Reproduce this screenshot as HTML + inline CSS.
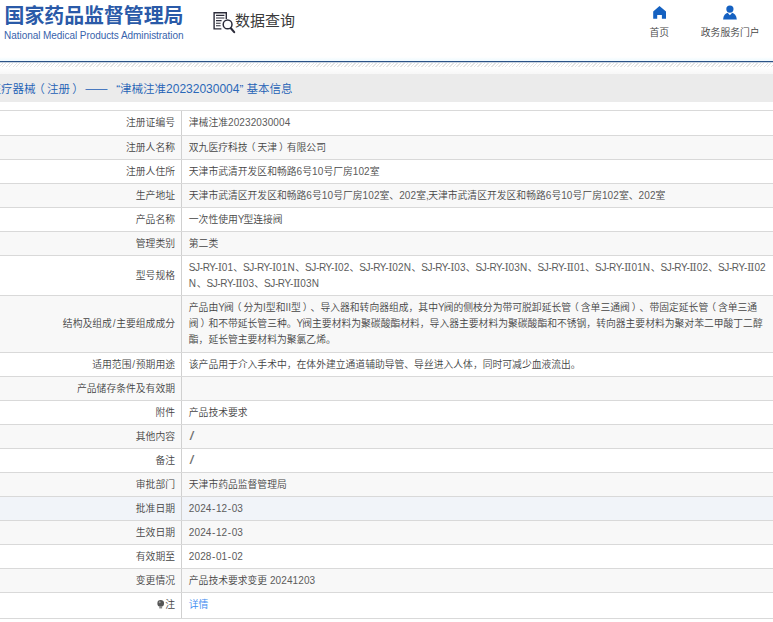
<!DOCTYPE html>
<html lang="zh-CN">
<head>
<meta charset="utf-8">
<title>国家药品监督管理局 数据查询</title>
<style>
html,body{margin:0;padding:0;}
body{width:773px;height:622px;overflow:hidden;background:#fff;position:relative;
 font-family:"Liberation Sans","Noto Sans CJK SC",sans-serif;color:#444;text-spacing-trim:space-all;}
.abs{position:absolute;white-space:nowrap;}
.logo{left:4.5px;top:2.3px;font-size:19.9px;line-height:28px;font-weight:bold;color:#2a5aa8;}
.logo-en{left:4.1px;top:29px;font-size:10px;line-height:14px;color:#3763ac;letter-spacing:-0.06px;}
.dq{left:235px;top:9.3px;font-size:15px;line-height:24px;color:#3a3a3a;}
.nav{font-size:9.81px;line-height:14px;color:#444;text-align:center;font-weight:350;}
.topline{left:0;top:61px;width:773px;height:2px;background:linear-gradient(to bottom,#2b5286 0,#2b5286 50%,rgba(43,82,134,0.25) 50%,rgba(43,82,134,0.25) 100%);}
.glow{left:0;top:57px;width:773px;height:4px;background:linear-gradient(to bottom,#ffffff,#eefaff);}
.hatch{left:0;top:63px;width:773px;height:4px;background:repeating-linear-gradient(135deg,#fff 0,#fff 1.5px,#e3e3e3 1.5px,#e3e3e3 2.47px);}
.fade{left:0;top:67px;width:773px;height:7px;background:linear-gradient(to bottom,#ffffff,#f7f7f7);}
.bar{left:0;top:74px;width:773px;height:28px;background:#ebebeb;}
.title{left:-10.5px;top:74px;font-size:11.5px;line-height:28px;color:#1c5fb5;font-weight:350;}
.title .d{font-size:12px;letter-spacing:0;color:#2a68b8;}
.tbl{left:0;top:0;width:773px;height:622px;font-size:9.81px;line-height:16px;font-weight:350;}
.rn{font-family:"DejaVu Serif",serif;font-weight:400;font-size:11px;line-height:10px;letter-spacing:-0.2px;color:#666;}
.rn2{letter-spacing:0;}
.u{letter-spacing:-0.37px;}
.y{letter-spacing:-0.97px;}
.n{letter-spacing:0.62px;}
.c{letter-spacing:-0.6px;}
.k .s{margin:0 0.8px;}
.d,.u,.y,.n,.c,.h,.i,.s{font-size:10px;color:#5c5c5c;}
.h{margin:0 0.55px;}
.v .s{display:inline-block;color:#707070;font-size:12px;line-height:12px;transform:translate(0.6px,-0.5px) scaleX(1.45);transform-origin:left center;}
.d{letter-spacing:0.11px;}
.ln{display:inline-block;}
.r{position:absolute;left:0;width:773px;border-top:1px solid #d9d9d9;box-sizing:border-box;background:#fff;}
.r.alt{background:#f8f8f8;}
.r.hov{background:#f1f4f9;}
.k{position:absolute;left:0;top:0;bottom:0;width:175px;display:flex;align-items:center;justify-content:flex-end;white-space:nowrap;}
.v{position:absolute;left:181px;top:0;bottom:0;right:0;border-left:1px solid #d0d0d0;padding-left:6.8px;display:flex;align-items:center;white-space:nowrap;}
.lnk{color:#3d8bf0;}
.bulb{margin-right:1.2px;}
.lastrow .k{bottom:2px;}
.lastrow .v{padding-bottom:2px;}
.last{left:0;top:618px;width:773px;height:1px;background:#d9d9d9;}
.pl,.pr{position:relative;}
.pl{left:-0.2em;}
.pr{left:0.2em;}
.dash{display:inline-block;width:23px;text-align:center;margin-left:0.7px;font-family:"Noto Sans CJK SC",sans-serif;font-weight:500;transform:scaleX(1.2);}
</style>
</head>
<body>
<div class="abs logo">国家药品监督管理局</div>
<div class="abs logo-en">National Medical Products Administration</div>

<svg class="abs" style="left:208px;top:6px" width="32" height="32" viewBox="208 6 32 32">
 <g fill="none" stroke="#2c2c3a">
  <path d="M226.3 19V12.8H214.1V28.9H221.4" stroke-width="1.4"/>
  <path d="M216 15.4H224.4M216 18H224.4M216 20.6H221.6M216 23.2H220.6M216 25.8H220.6" stroke-width="1.1"/>
  <circle cx="227.6" cy="24.4" r="4.4" stroke-width="1.5"/>
  <path d="M230.9 28.2L234.2 32.1" stroke-width="2.1" stroke-linecap="round"/>
 </g>
</svg>
<div class="abs dq">数据查询</div>

<svg class="abs" style="left:652px;top:5px" width="15" height="15" viewBox="0 0 15 15">
 <path d="M7.5 1L14 6.6V13.7H9.9V10.1H5.2V13.7H1.2V6.6Z" fill="#1561c1"/>
</svg>
<div class="abs nav" style="left:639.3px;top:25.7px;width:40px">首页</div>

<svg class="abs" style="left:722px;top:4px" width="16" height="16" viewBox="0 0 16 16">
 <circle cx="7.9" cy="5.1" r="3.6" fill="#1561c1"/>
 <path d="M1.1 15.5C1.3 11.6 3.6 9.4 5.6 8.8L7.9 11.2L10.2 8.8C12.2 9.4 14.6 11.6 14.8 15.5Z" fill="#1561c1"/>
</svg>
<div class="abs nav" style="left:694.7px;top:25.7px;width:71px">政务服务门户</div>

<div class="abs glow"></div>
<div class="abs topline"></div>
<div class="abs hatch"></div>
<div class="abs fade"></div>
<div class="abs bar"></div>
<div class="abs title">医疗器械<span class="pl">（</span>注册<span class="pr">）</span> <span class="dash">——</span> <span style="margin-left:4.6px">“</span>津械注准<span class="d">20232030004</span>” 基本信息</div>

<div class="abs tbl">
<div class="r" style="top:110px;height:25px"><div class="k">注册证编号</div><div class="v"><div><span class="ln">津械注准<span class="d">20232030004</span></span></div></div></div>
<div class="r alt" style="top:135px;height:24px"><div class="k">注册人名称</div><div class="v"><div><span class="ln">双九医疗科技<span class="pl">（</span>天津<span class="pr">）</span>有限公司</span></div></div></div>
<div class="r" style="top:159px;height:24px"><div class="k">注册人住所</div><div class="v"><div><span class="ln">天津市武清开发区和畅路<span class="d">6</span>号<span class="d">10</span>号厂房<span class="d">102</span>室</span></div></div></div>
<div class="r alt" style="top:183px;height:24px"><div class="k">生产地址</div><div class="v"><div><span class="ln">天津市武清区开发区和畅路<span class="d">6</span>号<span class="d">10</span>号厂房<span class="d">102</span>室、<span class="d">202</span>室<span class="c">,</span>天津市武清区开发区和畅路<span class="d">6</span>号<span class="d">10</span>号厂房<span class="d">102</span>室、<span class="d">202</span>室</span></div></div></div>
<div class="r" style="top:207px;height:24px"><div class="k">产品名称</div><div class="v"><div><span class="ln">一次性使用<span class="y">Y</span>型连接阀</span></div></div></div>
<div class="r alt" style="top:231px;height:24px"><div class="k">管理类别</div><div class="v"><div><span class="ln">第二类</span></div></div></div>
<div class="r" style="top:255px;height:40px"><div class="k">型号规格</div><div class="v"><div><span class="ln"><span class="u">SJ-RY-</span><span class="rn">Ⅰ</span><span class="d">01</span>、<span class="u">SJ-RY-</span><span class="rn">Ⅰ</span><span class="d">01</span><span class="n">N</span>、<span class="u">SJ-RY-</span><span class="rn">Ⅰ</span><span class="d">02</span>、<span class="u">SJ-RY-</span><span class="rn">Ⅰ</span><span class="d">02</span><span class="n">N</span>、<span class="u">SJ-RY-</span><span class="rn">Ⅰ</span><span class="d">03</span>、<span class="u">SJ-RY-</span><span class="rn">Ⅰ</span><span class="d">03</span><span class="n">N</span>、<span class="u">SJ-RY-</span><span class="rn rn2">Ⅱ</span><span class="d">01</span>、<span class="u">SJ-RY-</span><span class="rn rn2">Ⅱ</span><span class="d">01</span><span class="n">N</span>、<span class="u">SJ-RY-</span><span class="rn rn2">Ⅱ</span><span class="d">02</span>、<span class="u">SJ-RY-</span><span class="rn rn2">Ⅱ</span><span class="d">02</span></span><br><span class="ln"><span class="n">N</span>、<span class="u">SJ-RY-</span><span class="rn rn2">Ⅱ</span><span class="d">03</span>、<span class="u">SJ-RY-</span><span class="rn rn2">Ⅱ</span><span class="d">03</span><span class="n">N</span></span></div></div></div>
<div class="r alt" style="top:295px;height:57px"><div class="k">结构及组成<span class="s">/</span>主要组成成分</div><div class="v"><div><span class="ln">产品由<span class="y">Y</span>阀<span class="pl">（</span>分为<span class="i">I</span>型和<span class="i">II</span>型<span class="pr">）</span>、导入器和转向器组成，其中<span class="y">Y</span>阀的侧枝分为带可脱卸延长管<span class="pl">（</span>含单三通阀<span class="pr">）</span>、带固定延长管<span class="pl">（</span>含单三通</span><br><span class="ln">阀<span class="pr">）</span>和不带延长管三种。<span class="y">Y</span>阀主要材料为聚碳酸酯材料，导入器主要材料为聚碳酸酯和不锈钢，转向器主要材料为聚对苯二甲酸丁二醇</span><br><span class="ln">酯，延长管主要材料为聚氯乙烯。</span></div></div></div>
<div class="r" style="top:352px;height:24px"><div class="k">适用范围<span class="s">/</span>预期用途</div><div class="v"><div><span class="ln">该产品用于介入手术中，在体外建立通道辅助导管、导丝进入人体，同时可减少血液流出。</span></div></div></div>
<div class="r alt" style="top:376px;height:24px"><div class="k">产品储存条件及有效期</div><div class="v"><div><span class="ln"></span></div></div></div>
<div class="r" style="top:400px;height:24px"><div class="k">附件</div><div class="v"><div><span class="ln">产品技术要求</span></div></div></div>
<div class="r alt" style="top:424px;height:24px"><div class="k">其他内容</div><div class="v"><div><span class="ln"><span class="s">/</span></span></div></div></div>
<div class="r" style="top:448px;height:24px"><div class="k">备注</div><div class="v"><div><span class="ln"><span class="s">/</span></span></div></div></div>
<div class="r alt" style="top:472px;height:24px"><div class="k">审批部门</div><div class="v"><div><span class="ln">天津市药品监督管理局</span></div></div></div>
<div class="r hov" style="top:496px;height:24px"><div class="k">批准日期</div><div class="v"><div><span class="ln"><span class="d">2024</span><span class="h">-</span><span class="d">12</span><span class="h">-</span><span class="d">03</span></span></div></div></div>
<div class="r alt" style="top:520px;height:24px"><div class="k">生效日期</div><div class="v"><div><span class="ln"><span class="d">2024</span><span class="h">-</span><span class="d">12</span><span class="h">-</span><span class="d">03</span></span></div></div></div>
<div class="r" style="top:544px;height:24px"><div class="k">有效期至</div><div class="v"><div><span class="ln"><span class="d">2028</span><span class="h">-</span><span class="d">01</span><span class="h">-</span><span class="d">02</span></span></div></div></div>
<div class="r alt" style="top:568px;height:24px"><div class="k">变更情况</div><div class="v"><div><span class="ln">产品技术要求变更 <span class="d">20241203</span></span></div></div></div>
<div class="r lastrow" style="top:592px;height:26px"><div class="k"><svg class="bulb" width="7.4" height="9" viewBox="0 0 8 10"><circle cx="4" cy="3.8" r="3.7" fill="#555"/><rect x="2.4" y="7" width="3.2" height="2.4" fill="#888"/><circle cx="2.9" cy="2.6" r="1.1" fill="#9a9a9a"/></svg>注</div><div class="v"><div><a class="lnk">详情</a></div></div></div>
</div>
<div class="abs last"></div>
</body>
</html>
